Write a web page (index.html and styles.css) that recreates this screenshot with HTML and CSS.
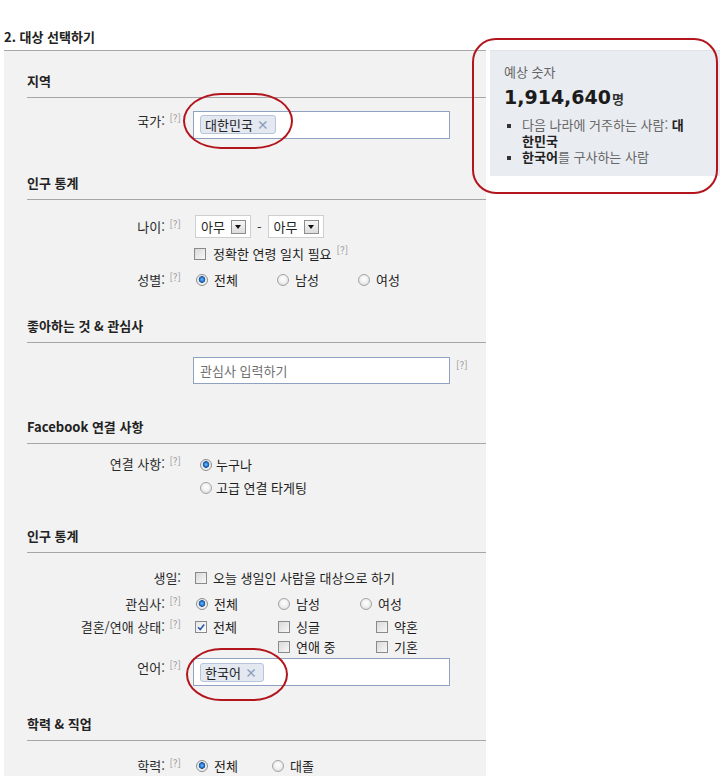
FILE: index.html
```html
<!DOCTYPE html>
<html lang="ko">
<head>
<meta charset="utf-8">
<title>대상 선택하기</title>
<link rel="stylesheet" href="styles.css">
</head>
<body>
<div class="page">
  <div class="main">
    <h1 class="title">2. 대상 선택하기</h1>
    <div class="panel">
      <h2 class="sec-head first">지역</h2>
      <div class="row input-row r-country">
        <div class="label">국가: <span class="help">[?]</span></div>
        <div class="field">
          <div class="textbox"><span class="token">대한민국 <span class="x">×</span></span></div>
        </div>
      </div>

      <h2 class="sec-head after-input">인구 통계</h2>
      <div class="row center r-age">
        <div class="label">나이: <span class="help">[?]</span></div>
        <div class="field">
          <span class="select first-sel">아무<span class="arrow"></span></span>
          <span class="dash">-</span>
          <span class="select">아무<span class="arrow"></span></span>
        </div>
      </div>
      <div class="row center r-tight">
        <div class="label"></div>
        <div class="field">
          <span class="opt"><span class="check ck-exact"></span><span class="txt">정확한 연령 일치 필요</span><span class="help help-after">[?]</span></span>
        </div>
      </div>
      <div class="row center r-tight">
        <div class="label">성별: <span class="help">[?]</span></div>
        <div class="field radios">
          <span class="opt w81"><span class="radio on"></span><span class="txt">전체</span></span>
          <span class="opt w81"><span class="radio"></span><span class="txt">남성</span></span>
          <span class="opt"><span class="radio"></span><span class="txt">여성</span></span>
        </div>
      </div>

      <h2 class="sec-head after-opts">좋아하는 것 &amp; 관심사</h2>
      <div class="row input-row r-interest">
        <div class="label"></div>
        <div class="field interest">
          <div class="textbox short"><span class="placeholder">관심사 입력하기</span></div>
          <span class="help help-side">[?]</span>
        </div>
      </div>

      <h2 class="sec-head after-input2">Facebook 연결 사항</h2>
      <div class="row r-conn">
        <div class="label conn-label">연결 사항: <span class="help">[?]</span></div>
        <div class="field conn">
          <div class="conn-line"><span class="radio on"></span><span class="txt">누구나</span></div>
          <div class="conn-line"><span class="radio"></span><span class="txt">고급 연결 타게팅</span></div>
        </div>
      </div>

      <h2 class="sec-head after-conn">인구 통계</h2>
      <div class="row center r-birth">
        <div class="label">생일:</div>
        <div class="field">
          <span class="opt"><span class="check ck-birth"></span><span class="txt">오늘 생일인 사람을 대상으로 하기</span></span>
        </div>
      </div>
      <div class="row center r-tight">
        <div class="label">관심사: <span class="help">[?]</span></div>
        <div class="field radios">
          <span class="opt w82"><span class="radio on"></span><span class="txt">전체</span></span>
          <span class="opt w82"><span class="radio"></span><span class="txt">남성</span></span>
          <span class="opt"><span class="radio"></span><span class="txt">여성</span></span>
        </div>
      </div>
      <div class="row r-marital">
        <div class="label">결혼/연애 상태: <span class="help">[?]</span></div>
        <div class="field marital">
          <span class="opt"><span class="check on"><svg viewBox="0 0 10 10" width="10" height="10"><path d="M2 5.2 L4.2 7.6 L8.2 2.4" fill="none" stroke="#2b5aa8" stroke-width="1.6"/></svg></span><span class="txt">전체</span></span>
          <span class="opt"><span class="check"></span><span class="txt">싱글</span></span>
          <span class="opt"><span class="check"></span><span class="txt">약혼</span></span>
          <span class="opt col2"><span class="check"></span><span class="txt">연애 중</span></span>
          <span class="opt"><span class="check"></span><span class="txt">기혼</span></span>
        </div>
      </div>
      <div class="row input-row r-lang">
        <div class="label">언어: <span class="help">[?]</span></div>
        <div class="field">
          <div class="textbox"><span class="token token-lang">한국어 <span class="x">×</span></span></div>
        </div>
      </div>

      <h2 class="sec-head after-lang">학력 &amp; 직업</h2>
      <div class="row center r-edu">
        <div class="label">학력: <span class="help">[?]</span></div>
        <div class="field radios">
          <span class="opt w76"><span class="radio on"></span><span class="txt">전체</span></span>
          <span class="opt"><span class="radio"></span><span class="txt">대졸</span></span>
        </div>
      </div>
    </div>
  </div>

  <aside class="estimate">
    <div class="est-label">예상 숫자</div>
    <div class="est-num"><span class="big">1,914,640</span><span class="unit">명</span></div>
    <ul class="est-list">
      <li>다음 나라에 거주하는 사람: <b>대<br>한민국</b></li>
      <li><b>한국어</b>를 구사하는 사람</li>
    </ul>
  </aside>

  <div class="mark mark-est"></div>
  <div class="mark mark-country"></div>
  <div class="mark mark-lang"></div>
</div>
</body>
</html>
```

FILE: styles.css
```css
* { box-sizing: border-box; }

html, body {
  margin: 0;
  padding: 0;
  background: #ffffff;
}

body {
  font-family: "Noto Sans CJK KR", "Noto Sans", sans-serif;
  font-size: 13px;
  color: #2a2a2a;
  overflow: hidden;
}

.page {
  position: relative;
  display: flex;
  align-items: flex-start;
  height: 776px;
}

.main {
  width: 482px;
  margin-left: 4px;
  display: flex;
  flex-direction: column;
  height: 776px;
}

.title {
  margin: 0;
  padding: 28px 0 4px 0;
  font-size: 13px;
  line-height: 18px;
  font-weight: bold;
  color: #222;
  border-bottom: 1px solid #a8a8a8;
}

.panel {
  flex: 1;
  background: #f2f2f2;
  padding-left: 23px;
  display: flex;
  flex-direction: column;
}

.sec-head {
  margin: 28px 0 0 0;
  font-size: 13px;
  font-weight: bold;
  line-height: 18px;
  padding-bottom: 7px;
  color: #222;
  border-bottom: 1px solid #a6a6a6;
}
.sec-head.first { margin-top: 21px; }
.sec-head.after-input { margin-top: 35px; }
.sec-head.after-opts { margin-top: 27px; }
.sec-head.after-input2 { margin-top: 34px; }
.sec-head.after-conn { margin-top: 28px; }
.sec-head.after-lang { margin-top: 29px; }

.row {
  display: flex;
  align-items: flex-start;
  margin-top: 6px;
}
.row.center { align-items: center; }

.r-country { margin-top: 13px; }
.r-age { margin-top: 15px; height: 23px; }
.r-tight { height: 20px; }
.r-interest { margin-top: 14px; }
.r-conn { margin-top: 9px; }
.r-birth { margin-top: 15px; height: 20px; }
.r-marital { margin-top: 3px; }
.r-lang { margin-top: 1px; }
.r-edu { margin-top: 15px; height: 20px; }

.label {
  width: 154px;
  flex: none;
  text-align: right;
  line-height: 20px;
  color: #2a2a2a;
  white-space: nowrap;
}
.conn-label { padding-top: 1px; }

.help {
  font-size: 10px;
  color: #9a9a9a;
  vertical-align: top;
  position: relative;
  top: -3px;
  margin-left: 1px;
}

.field {
  margin-left: 12px;
  display: flex;
  align-items: center;
  line-height: 20px;
}

/* text boxes */
.textbox {
  width: 257px;
  height: 28px;
  background: #ffffff;
  border: 1px solid #8fa2c2;
  padding: 3px 0 0 6px;
}
.textbox.short { height: 27px; padding: 0 0 0 6px; display: flex; align-items: center; }

.token {
  display: inline-flex;
  align-items: center;
  height: 19px;
  padding: 0 6px 0 4px;
  background: #e3e8f1;
  border: 1px solid #b8c4da;
  border-radius: 3px;
  color: #1e1e1e;
  line-height: 17px;
}
.token-lang { margin-top: 1px; }
.token .x {
  color: #8b9cbc;
  font-size: 12px;
  margin-left: 4px;
  font-weight: bold;
}

.placeholder { color: #6f6f6f; }

.interest { align-items: flex-start; }
.help-side {
  top: 0;
  margin-left: 6px;
  line-height: 12px;
  margin-top: 2px;
}

/* selects */
.select {
  display: inline-flex;
  align-items: center;
  justify-content: space-between;
  width: 56px;
  height: 23px;
  border: 1px solid #cfcfcf;
  background: #ffffff;
  padding: 0 4px 0 5px;
  color: #1e1e1e;
}
.select.first-sel { margin-left: 2px; }
.arrow {
  width: 15px;
  height: 14px;
  border: 1px solid #8d8d8d;
  background: linear-gradient(#f7f7f7, #dcdcdc);
  position: relative;
  display: inline-block;
}
.arrow::after {
  content: "";
  position: absolute;
  left: 3px;
  top: 4px;
  border-left: 3.5px solid transparent;
  border-right: 3.5px solid transparent;
  border-top: 4px solid #111;
}
.dash { margin: 0 6px 0 6px; color: #333; }

/* options */
.opt {
  display: inline-flex;
  align-items: center;
  white-space: nowrap;
}
.opt .txt { margin-left: 6px; color: #1e1e1e; }
.w81 { width: 81px; }
.w82 { width: 82px; }
.w76 { width: 76px; }
.radios { padding-left: 3px; }

.radio {
  display: inline-block;
  width: 12px;
  height: 12px;
  border-radius: 50%;
  border: 1px solid #a3a3a3;
  background: radial-gradient(circle at 50% 40%, #ffffff 0, #f1f1f1 45%, #d4d4d4 100%);
  flex: none;
}
.radio.on {
  border-color: #8e8e8e;
  background: radial-gradient(circle at 50% 45%, #7cc0ff 0, #2a7fd8 1.8px, #1a4f94 3px, #eaeaea 3.6px, #f8f8f8 100%);
}

.check {
  display: inline-flex;
  align-items: center;
  justify-content: center;
  width: 12px;
  height: 12px;
  border: 1px solid #8a8a8a;
  background: linear-gradient(135deg, #d9d9d9, #f8f8f8);
  flex: none;
}
.check.on { background: linear-gradient(135deg, #e6e6e6, #ffffff); }
.ck-exact { margin-left: 1px; }
.ck-exact + .txt { margin-left: 7px; }
.ck-birth { margin-left: 2px; }
.help-after { margin-left: 5px; top: -4px; }

.marital {
  display: grid;
  grid-template-columns: 83px 98px auto;
  grid-auto-rows: 20px;
  padding-left: 2px;
}
.marital .col2 { grid-column: 2; }
.marital .txt { margin-left: 6px; }

.conn {
  flex-direction: column;
  align-items: flex-start;
}
.conn-line {
  display: flex;
  align-items: center;
  height: 23px;
  padding-left: 7px;
}
.conn-line .txt { margin-left: 4px; color: #1e1e1e; }

/* estimate box */
.estimate {
  width: 230px;
  margin-top: 50px;
  margin-left: 4px;
  background: #e9ecf0;
  border-top: 1px solid #dfe3ea;
  padding: 11px 10px 11px 14px;
}
.est-label {
  line-height: 20px;
  color: #666;
  font-size: 13px;
}
.est-num {
  margin-top: 2px;
  line-height: 26px;
  color: #1b1b1b;
  white-space: nowrap;
}
.est-num .big {
  font-family: "DejaVu Sans", "Noto Sans", sans-serif;
  font-weight: bold;
  font-size: 19px;
  letter-spacing: 0;
}
.est-num .unit {
  font-size: 13px;
  font-weight: bold;
  color: #333;
  margin-left: 1px;
}
.est-list {
  margin: 5px 0 0 0;
  padding-left: 18px;
  list-style: square outside;
  line-height: 16px;
  color: #666;
  font-size: 13px;
}
.est-list li { white-space: nowrap; }
.est-list li::marker { color: #333; font-size: 10px; }
.est-list b { color: #222; font-weight: bold; }

/* red annotation marks drawn over the screenshot */
.mark {
  position: absolute;
  border: 2px solid #b3151d;
  pointer-events: none;
}
.mark-est {
  left: 472px;
  top: 38px;
  width: 246px;
  height: 156px;
  border-radius: 24px;
}
.mark-country {
  left: 183px;
  top: 93px;
  width: 110px;
  height: 56px;
  border-radius: 38px / 28px;
}
.mark-lang {
  left: 186px;
  top: 648px;
  width: 102px;
  height: 53px;
  border-radius: 36px / 27px;
}
```
